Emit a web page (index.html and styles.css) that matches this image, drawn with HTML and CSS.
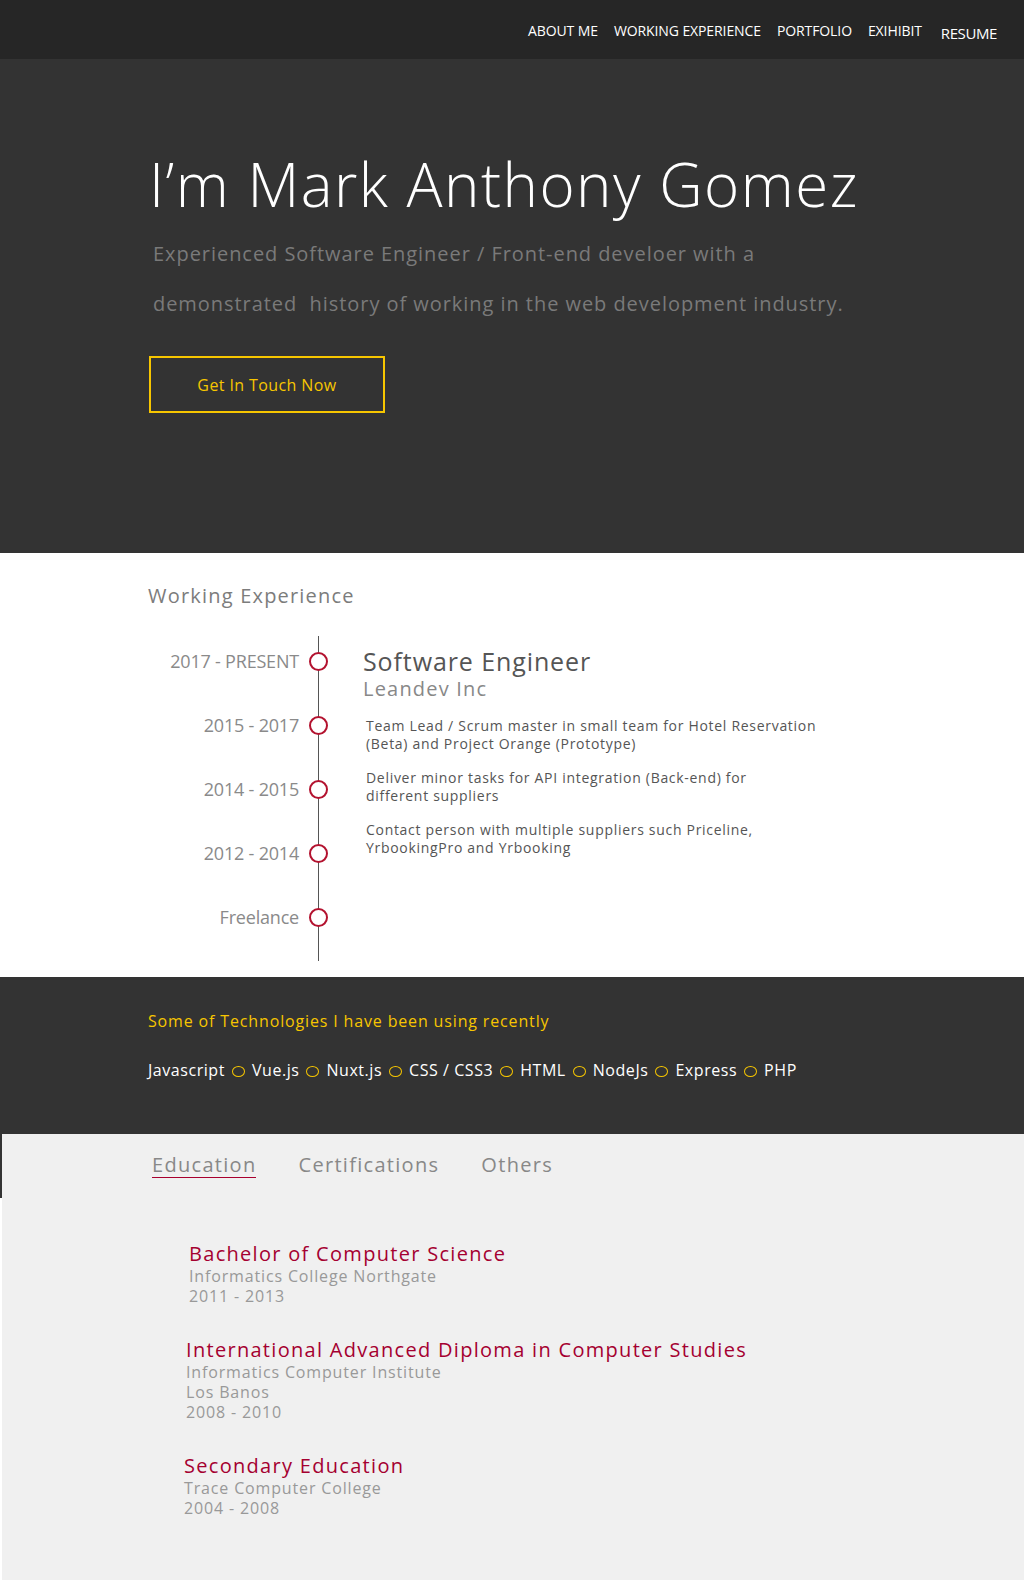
FILE: index.html
```html
<!DOCTYPE html>
<html lang="en">
<head>
<meta charset="utf-8">
<title>Mark Anthony Gomez</title>
<link rel="stylesheet" href="styles.css">
</head>
<body>
<header class="nav">
  <nav class="nav-links">
    <a class="nav-link" href="#">ABOUT ME</a>
    <a class="nav-link" href="#">WORKING EXPERIENCE</a>
    <a class="nav-link" href="#">PORTFOLIO</a>
    <a class="nav-link" href="#">EXIHIBIT</a>
    <a class="nav-link nav-link-big" href="#">RESUME</a>
  </nav>
</header>

<section class="hero">
  <div class="container">
    <h1 class="hero-title">I’m Mark Anthony Gomez</h1>
    <p class="hero-sub">Experienced Software Engineer / Front-end develoer with a<br>demonstrated&nbsp; history of working in the web development industry.</p>
    <a class="btn" href="#">Get In Touch Now</a>
  </div>
</section>

<section class="work">
  <div class="container">
    <h2 class="section-title">Working Experience</h2>
    <div class="timeline">
      <div class="tl-left">
        <div class="tl-row"><span class="tl-date">2017 - PRESENT</span><span class="tl-dot"></span></div>
        <div class="tl-row"><span class="tl-date">2015 - 2017</span><span class="tl-dot"></span></div>
        <div class="tl-row"><span class="tl-date">2014 - 2015</span><span class="tl-dot"></span></div>
        <div class="tl-row"><span class="tl-date">2012 - 2014</span><span class="tl-dot"></span></div>
        <div class="tl-row"><span class="tl-date">Freelance</span><span class="tl-dot"></span></div>
      </div>
      <div class="tl-content">
        <h3 class="job-title">Software Engineer</h3>
        <div class="job-company">Leandev Inc</div>
        <p class="job-desc">Team Lead / Scrum master in small team for Hotel Reservation<br>(Beta) and Project Orange (Prototype)</p>
        <p class="job-desc">Deliver minor tasks for API integration (Back-end) for<br>different suppliers</p>
        <p class="job-desc">Contact person with multiple suppliers such Priceline,<br>YrbookingPro and Yrbooking</p>
      </div>
    </div>
  </div>
</section>

<section class="tech">
  <div class="container">
    <h2 class="tech-title">Some of Technologies I have been using recently</h2>
    <ul class="tech-list">
      <li>Javascript</li><li class="tech-dot"></li>
      <li>Vue.js</li><li class="tech-dot"></li>
      <li>Nuxt.js</li><li class="tech-dot"></li>
      <li>CSS / CSS3</li><li class="tech-dot"></li>
      <li>HTML</li><li class="tech-dot"></li>
      <li>NodeJs</li><li class="tech-dot"></li>
      <li>Express</li><li class="tech-dot"></li>
      <li>PHP</li>
    </ul>
  </div>
</section>

<section class="edu">
  <div class="tabs-bar">
    <div class="container tabs">
      <a class="tab tab-active" href="#">Education</a>
      <a class="tab" href="#">Certifications</a>
      <a class="tab" href="#">Others</a>
    </div>
  </div>
  <div class="container edu-list">
    <div class="edu-item edu-item-1">
      <h3 class="edu-title">Bachelor of Computer Science</h3>
      <div class="edu-line">Informatics College Northgate</div>
      <div class="edu-line">2011 - 2013</div>
    </div>
    <div class="edu-item">
      <h3 class="edu-title">International Advanced Diploma in Computer Studies</h3>
      <div class="edu-line">Informatics Computer Institute</div>
      <div class="edu-line">Los Banos</div>
      <div class="edu-line">2008 - 2010</div>
    </div>
    <div class="edu-item edu-item-3">
      <h3 class="edu-title">Secondary Education</h3>
      <div class="edu-line">Trace Computer College</div>
      <div class="edu-line">2004 - 2008</div>
    </div>
  </div>
</section>
</body>
</html>
```

FILE: styles.css
```css
* { box-sizing: border-box; }
html, body { margin: 0; padding: 0; }
body {
  font-family: "Open Sans", "Noto Sans", sans-serif;
  background: #ffffff;
  color: #555;
  min-height: 1580px;
  display: flex;
  flex-direction: column;
}
a { text-decoration: none; color: inherit; }
h1, h2, h3, p, ul { margin: 0; padding: 0; font-weight: normal; }

.container { width: 728px; margin: 0 auto; }

/* NAV */
.nav {
  height: 59px;
  background: #262626;
  display: flex;
  justify-content: flex-end;
  align-items: center;
  padding-right: 27px;
}
.nav-links { display: flex; align-items: center; gap: 16px; }
.nav-link { color: #fff; font-size: 14px; letter-spacing: -0.1px; margin-top: 2px; }
.nav-link-big { font-size: 15px; margin-top: 6px; margin-left: 3px; letter-spacing: -0.4px; }

/* HERO */
.hero {
  background: #333333;
  height: 494px;
  padding-top: 89px;
}
.hero-title {
  color: #fff;
  font-size: 60px;
  font-weight: 300;
  line-height: 72px;
  letter-spacing: 1.5px;
  margin-left: 1px;
}
.hero-sub {
  color: #7a7a7a;
  font-size: 20px;
  line-height: 50px;
  margin-top: 9px;
  margin-left: 5px;
  letter-spacing: 0.95px;
}
.btn {
  display: flex;
  align-items: center;
  justify-content: center;
  width: 236px;
  height: 57px;
  border: 2px solid #f7c600;
  color: #f7c600;
  font-size: 16px;
  margin-top: 27px;
  margin-left: 1px;
  letter-spacing: 0.4px;
}

/* WORK */
.work { background: #fff; height: 424px; padding-top: 29px; }
.section-title {
  color: #7c7c7c;
  font-size: 20px;
  line-height: 28px;
  letter-spacing: 1.2px;
}
.timeline { display: flex; margin-top: 26px; }
.tl-left {
  width: 171px;
  border-right: 1px solid #555;
  padding-top: 16px;
  padding-bottom: 35px;
  display: flex;
  flex-direction: column;
  gap: 46px;
}
.tl-row {
  height: 18px;
  display: flex;
  justify-content: flex-end;
  align-items: center;
  margin-right: -10px;
}
.tl-date {
  color: #8a8a8a;
  font-size: 18px;
  margin-right: 10px;
  letter-spacing: -0.2px;
}
.tl-dot {
  width: 19px;
  height: 19px;
  border: 2px solid #b3122f;
  border-radius: 50%;
  background: #fff;
  flex: none;
}
.tl-content { padding-left: 44px; padding-top: 10px; }
.job-title { font-size: 25px; line-height: 30px; color: #555; letter-spacing: 0.9px; }
.job-company { font-size: 20px; line-height: 22px; color: #888; letter-spacing: 1.2px; margin-top: 2px; }
.job-desc {
  font-size: 14px;
  line-height: 18px;
  color: #555;
  margin-top: 16px;
  margin-left: 3px;
  letter-spacing: 0.7px;
}
.job-company + .job-desc { margin-top: 17px; }

/* TECH */
.tech { background: #333333; height: 157px; padding-top: 32px; }
.tech-title {
  color: #f7c600;
  font-size: 16px;
  line-height: 24px;
  letter-spacing: 0.85px;
}
.tech-list {
  list-style: none;
  display: flex;
  align-items: center;
  gap: 6px;
  margin-top: 25px;
  color: #fff;
  font-size: 16px;
  line-height: 24px;
  letter-spacing: 0.55px;
}
.tech-dot {
  width: 13px;
  height: 11px;
  border: 1.5px solid #f7c600;
  border-radius: 50%;
  margin: 2px 1px 0;
}

/* EDUCATION */
.edu {
  flex: 1;
  background: #f0f0f0;
  margin-left: 2px;
  padding-bottom: 40px;
}
.tabs-bar {
  height: 64px;
  margin-left: -2px;
  border-left: 2px solid #333;
  padding-top: 19px;
}
.tabs { display: flex; gap: 42px; padding-left: 3px; }
.tab {
  color: #888;
  font-size: 20px;
  line-height: 24px;
  letter-spacing: 1.3px;
}
.tab-active { border-bottom: 1.5px solid #a8002f; }
.edu-list { padding-top: 44px; display: flex; flex-direction: column; gap: 32px; }
.edu-item { padding-left: 37px; }
.edu-item-1 { padding-left: 40px; }
.edu-item-3 { padding-left: 35px; }
.edu-title {
  color: #a50030;
  font-size: 20px;
  line-height: 24px;
  letter-spacing: 1.3px;
}
.edu-line {
  color: #999;
  font-size: 16px;
  line-height: 20px;
  letter-spacing: 0.85px;
}
```
